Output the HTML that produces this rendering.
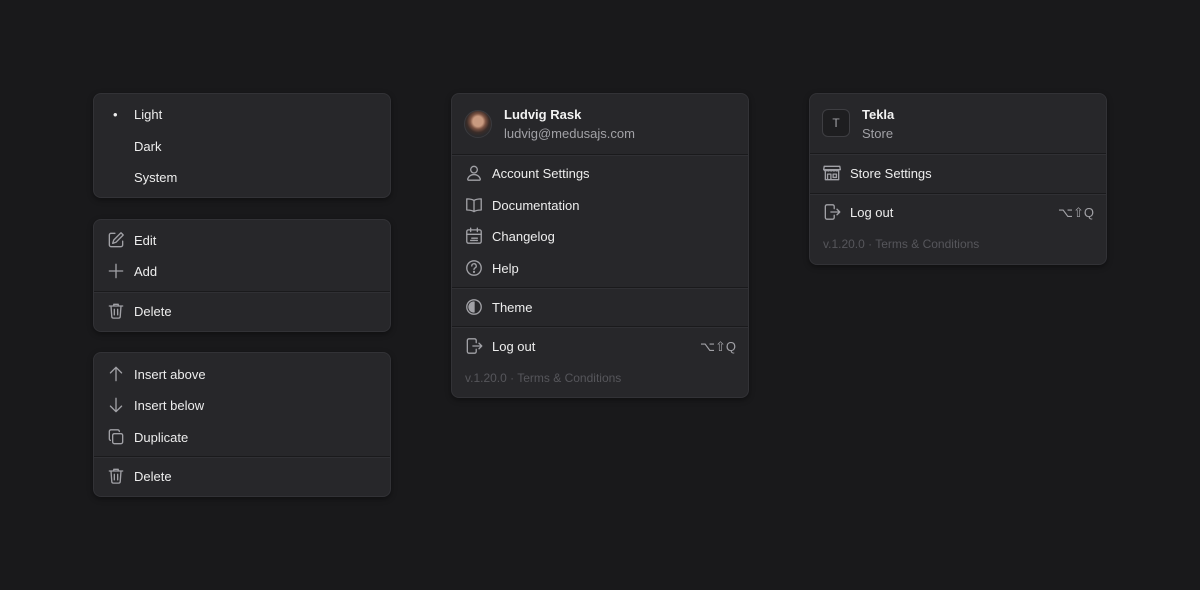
<!DOCTYPE html><html><head><style>
body{margin:0;width:1200px;height:590px;background:#19191b;font-family:"Liberation Sans",sans-serif;position:relative;overflow:hidden}
.c{position:absolute;background:#27272a;border:1px solid #323236;border-radius:8px;box-shadow:0 2px 6px rgba(0,0,0,.4);box-sizing:border-box}
.t{position:absolute;font-size:13px;color:#ededed;line-height:18px;height:18px;white-space:nowrap;margin-top:1px}
.s{color:#a1a1a6}
.f{color:#56565b;font-size:12px}
.sep{position:absolute;left:0;right:0;height:1px;background:#1a1a1c;border-bottom:1px solid #303034}
svg{position:absolute;width:20px;height:20px;margin:-1px 0 0 -1px;fill:none;stroke:#a1a1a6;stroke-width:1.2;stroke-linecap:round;stroke-linejoin:round}
b{font-weight:bold;color:#f2f2f2}
</style></head><body>
<div class="c" style="left:93px;top:93px;width:298px;height:105px"></div>
<div class="t" style="left:113px;top:105px">•</div>
<div class="t" style="left:134px;top:105px">Light</div>
<div class="t" style="left:134px;top:137px">Dark</div>
<div class="t" style="left:134px;top:168px">System</div>
<div class="c" style="left:93px;top:219px;width:298px;height:113px"><div class="sep" style="top:71px"></div></div>
<svg style="left:107px;top:231px" viewBox="0 0 18 18"><path d="M8 3H4.5A1.5 1.5 0 0 0 3 4.5v9A1.5 1.5 0 0 0 4.5 15h9a1.5 1.5 0 0 0 1.5-1.5V10"/><path d="M13.5 2.5l2 2L9 11l-3 1 1-3z"/></svg>
<div class="t" style="left:134px;top:231px">Edit</div>
<svg style="left:107px;top:262px" viewBox="0 0 18 18"><path d="M9 3v12M3 9h12"/></svg>
<div class="t" style="left:134px;top:262px">Add</div>
<svg style="left:107px;top:302px" viewBox="0 0 18 18"><path d="M3 4.5h12M7 4.5V3h4v1.5M4.5 4.5l.7 9.5a1.5 1.5 0 0 0 1.5 1.4h4.6a1.5 1.5 0 0 0 1.5-1.4l.7-9.5M7.5 7.5v5M10.5 7.5v5"/></svg>
<div class="t" style="left:134px;top:302px">Delete</div>
<div class="c" style="left:93px;top:352px;width:298px;height:145px"><div class="sep" style="top:103px"></div></div>
<svg style="left:107px;top:365px" viewBox="0 0 18 18"><path d="M9 15V3M4 8l5-5 5 5"/></svg>
<div class="t" style="left:134px;top:365px">Insert above</div>
<svg style="left:107px;top:396px" viewBox="0 0 18 18"><path d="M9 3v12M4 10l5 5 5-5"/></svg>
<div class="t" style="left:134px;top:396px">Insert below</div>
<svg style="left:107px;top:428px" viewBox="0 0 18 18"><rect x="6" y="6" width="9" height="9" rx="1.5"/><path d="M12 4V4a1.5 1.5 0 0 0-1.5-1.5h-6A1.5 1.5 0 0 0 3 4v6.5A1.5 1.5 0 0 0 4 12"/></svg>
<div class="t" style="left:134px;top:428px">Duplicate</div>
<svg style="left:107px;top:467px" viewBox="0 0 18 18"><path d="M3 4.5h12M7 4.5V3h4v1.5M4.5 4.5l.7 9.5a1.5 1.5 0 0 0 1.5 1.4h4.6a1.5 1.5 0 0 0 1.5-1.4l.7-9.5M7.5 7.5v5M10.5 7.5v5"/></svg>
<div class="t" style="left:134px;top:467px">Delete</div>
<div class="c" style="left:451px;top:93px;width:298px;height:305px">
<div class="sep" style="top:60px"></div><div class="sep" style="top:193px"></div><div class="sep" style="top:232px"></div></div>
<div style="position:absolute;left:464px;top:110px;width:26px;height:26px;border-radius:50%;background:radial-gradient(circle at 50% 40%,#c99a80 0 25%,#7a5242 38%,#3a2c28 55%,#2a2a2c 72%);border:1px solid #3a3a3e"></div>
<div class="t" style="left:504px;top:105px"><b>Ludvig Rask</b></div>
<div class="t s" style="left:504px;top:124px">ludvig@medusajs.com</div>
<svg style="left:465px;top:164px" viewBox="0 0 18 18"><circle cx="9" cy="6" r="3"/><path d="M4 15.5h10a1 1 0 0 0 .5-1.5A6 6 0 0 0 3.5 14a1 1 0 0 0 .5 1.5z"/></svg>
<div class="t" style="left:492px;top:164px">Account Settings</div>
<svg style="left:465px;top:196px" viewBox="0 0 18 18"><path d="M9 5C7.5 3.8 5 3.5 2.5 3.5v10c2.5 0 5 .3 6.5 1.5 1.5-1.2 4-1.5 6.5-1.5v-10C13 3.5 10.5 3.8 9 5zM9 5v10"/></svg>
<div class="t" style="left:492px;top:196px">Documentation</div>
<svg style="left:465px;top:227px" viewBox="0 0 18 18"><rect x="2.5" y="3.5" width="13" height="12" rx="1.5"/><path d="M6 2v3M12 2v3M2.5 7.5h13M7 11h5M6 13h4M11 13h1"/></svg>
<div class="t" style="left:492px;top:227px">Changelog</div>
<svg style="left:465px;top:259px" viewBox="0 0 18 18"><circle cx="9" cy="9" r="6.5"/><path d="M7 7.2a2 2 0 1 1 2.8 1.8c-.5.3-.8.6-.8 1.3"/><circle cx="9" cy="12.5" r=".4" fill="#a1a1a6"/></svg>
<div class="t" style="left:492px;top:259px">Help</div>
<svg style="left:465px;top:298px" viewBox="0 0 18 18"><circle cx="9" cy="9" r="6.5"/><path d="M9 4.5a4.5 4.5 0 0 0 0 9z" fill="#a1a1a6"/></svg>
<div class="t" style="left:492px;top:298px">Theme</div>
<svg style="left:465px;top:337px" viewBox="0 0 18 18"><path d="M11 6V4a1.5 1.5 0 0 0-1.5-1.5h-5A1.5 1.5 0 0 0 3 4v10a1.5 1.5 0 0 0 1.5 1.5h5A1.5 1.5 0 0 0 11 14v-2M8 9h8M13.5 6.5L16 9l-2.5 2.5"/></svg>
<div class="t" style="left:492px;top:337px">Log out</div>
<div class="t s" style="left:700px;top:337px">⌥⇧Q</div>
<div class="t f" style="left:465px;top:368px">v.1.20.0 · Terms &amp; Conditions</div>
<div class="c" style="left:809px;top:93px;width:298px;height:172px">
<div class="sep" style="top:59px"></div><div class="sep" style="top:99px"></div></div>
<div style="position:absolute;left:822px;top:109px;width:26px;height:26px;border-radius:6px;background:#1e1e20;border:1px solid #3e3e42;color:#a1a1a6;font-size:12px;text-align:center;line-height:26px">T</div>
<div class="t" style="left:862px;top:105px"><b>Tekla</b></div>
<div class="t s" style="left:862px;top:124px">Store</div>
<svg style="left:823px;top:164px" viewBox="0 0 18 18"><path d="M3 7v8h12V7M2 3h14l.5 3H1.5zM2 6c0 1.5 2.5 1.5 2.5 0 0 1.5 2.5 1.5 2.5 0 0 1.5 2.5 1.5 2.5 0 0 1.5 2.5 1.5 2.5 0 0 1.5 2.5 1.5 2.5 0M5 15v-5h3v5M10 10h3v3h-3z"/></svg>
<div class="t" style="left:850px;top:164px">Store Settings</div>
<svg style="left:823px;top:203px" viewBox="0 0 18 18"><path d="M11 6V4a1.5 1.5 0 0 0-1.5-1.5h-5A1.5 1.5 0 0 0 3 4v10a1.5 1.5 0 0 0 1.5 1.5h5A1.5 1.5 0 0 0 11 14v-2M8 9h8M13.5 6.5L16 9l-2.5 2.5"/></svg>
<div class="t" style="left:850px;top:203px">Log out</div>
<div class="t s" style="left:1058px;top:203px">⌥⇧Q</div>
<div class="t f" style="left:823px;top:234px">v.1.20.0 · Terms &amp; Conditions</div>
</body></html>
